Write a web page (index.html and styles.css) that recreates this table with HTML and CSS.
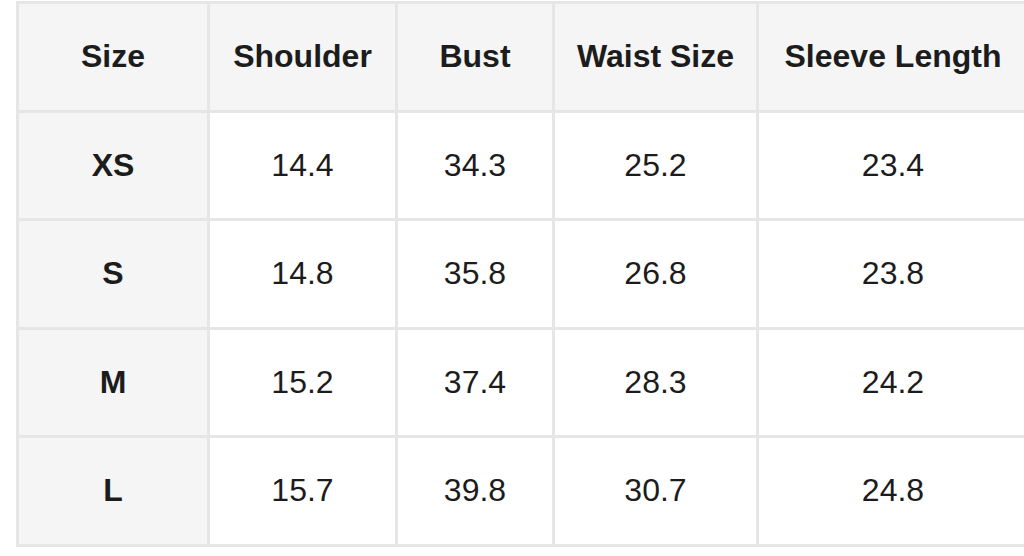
FILE: index.html
```html
<!DOCTYPE html>
<html>
<head>
<meta charset="utf-8">
<link rel="stylesheet" href="styles.css">
</head>
<body>
<table class="size-table">
  <colgroup>
    <col class="c1"><col class="c2"><col class="c3"><col class="c4"><col class="c5">
  </colgroup>
  <thead>
    <tr><th>Size</th><th>Shoulder</th><th>Bust</th><th>Waist Size</th><th>Sleeve Length</th></tr>
  </thead>
  <tbody>
    <tr><th>XS</th><td>14.4</td><td>34.3</td><td>25.2</td><td>23.4</td></tr>
    <tr><th>S</th><td>14.8</td><td>35.8</td><td>26.8</td><td>23.8</td></tr>
    <tr><th>M</th><td>15.2</td><td>37.4</td><td>28.3</td><td>24.2</td></tr>
    <tr><th>L</th><td>15.7</td><td>39.8</td><td>30.7</td><td>24.8</td></tr>
  </tbody>
</table>
</body>
</html>
```
FILE: styles.css
```css
html, body {
  margin: 0;
  padding: 0;
  background: #ffffff;
}
body {
  padding: 1px 0 0 16px;
  font-family: "Liberation Sans", Arial, sans-serif;
  color: #1c1c1c;
  overflow: hidden;
}
.size-table {
  border-collapse: collapse;
  table-layout: fixed;
  width: 1011px;
}
.c1 { width: 191px; }
.c2 { width: 188px; }
.c3 { width: 157px; }
.c4 { width: 204px; }
.c5 { width: 271px; }
.size-table th,
.size-table td {
  border: 3px solid #e6e6e6;
  height: 108.5px;
  padding: 0;
  text-align: center;
  vertical-align: middle;
  font-size: 32px;
  box-sizing: border-box;
}
.size-table th {
  background: #f5f5f5;
  font-weight: bold;
}
.size-table td {
  background: #ffffff;
  font-weight: normal;
}
```
